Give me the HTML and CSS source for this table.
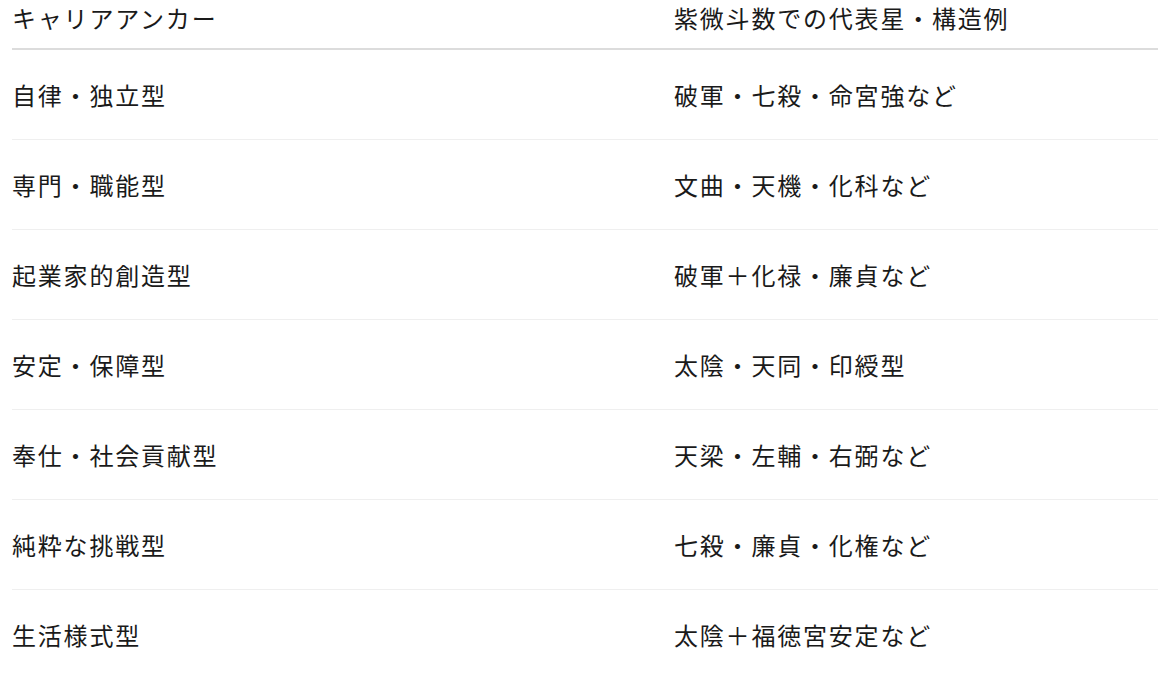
FILE: index.html
```html
<!DOCTYPE html>
<html lang="ja">
<head>
<meta charset="utf-8">
<title>キャリアアンカー</title>
<link rel="stylesheet" href="styles.css">
</head>
<body>
<div class="table">
  <div class="row head">
    <div class="cell">キャリアアンカー</div>
    <div class="cell">紫微斗数での代表星・構造例</div>
  </div>
  <div class="row">
    <div class="cell">自律・独立型</div>
    <div class="cell">破軍・七殺・命宮強など</div>
  </div>
  <div class="row">
    <div class="cell">専門・職能型</div>
    <div class="cell">文曲・天機・化科など</div>
  </div>
  <div class="row">
    <div class="cell">起業家的創造型</div>
    <div class="cell">破軍＋化禄・廉貞など</div>
  </div>
  <div class="row">
    <div class="cell">安定・保障型</div>
    <div class="cell">太陰・天同・印綬型</div>
  </div>
  <div class="row">
    <div class="cell">奉仕・社会貢献型</div>
    <div class="cell">天梁・左輔・右弼など</div>
  </div>
  <div class="row">
    <div class="cell">純粋な挑戦型</div>
    <div class="cell">七殺・廉貞・化権など</div>
  </div>
  <div class="row last">
    <div class="cell">生活様式型</div>
    <div class="cell">太陰＋福徳宮安定など</div>
  </div>
</div>
</body>
</html>
```
FILE: styles.css
```css
html, body {
  margin: 0;
  padding: 0;
  background: #ffffff;
}
body {
  padding-left: 12px;
  font-family: "Noto Sans CJK JP", "Noto Sans", sans-serif;
  color: #1a1a1a;
  font-size: 24px;
  letter-spacing: 1.8px;
}
.table {
  display: flex;
  flex-direction: column;
}
.row {
  display: grid;
  grid-template-columns: 662px 1fr;
  border-bottom: 1px solid #efefef;
  padding: 27px 0 26px;
  line-height: 36px;
}
.row.head {
  padding: 0 0 12px;
  border-bottom: 2px solid #dcdcdc;
}
.row.last {
  border-bottom: none;
}
.cell {
  white-space: nowrap;
}
```
